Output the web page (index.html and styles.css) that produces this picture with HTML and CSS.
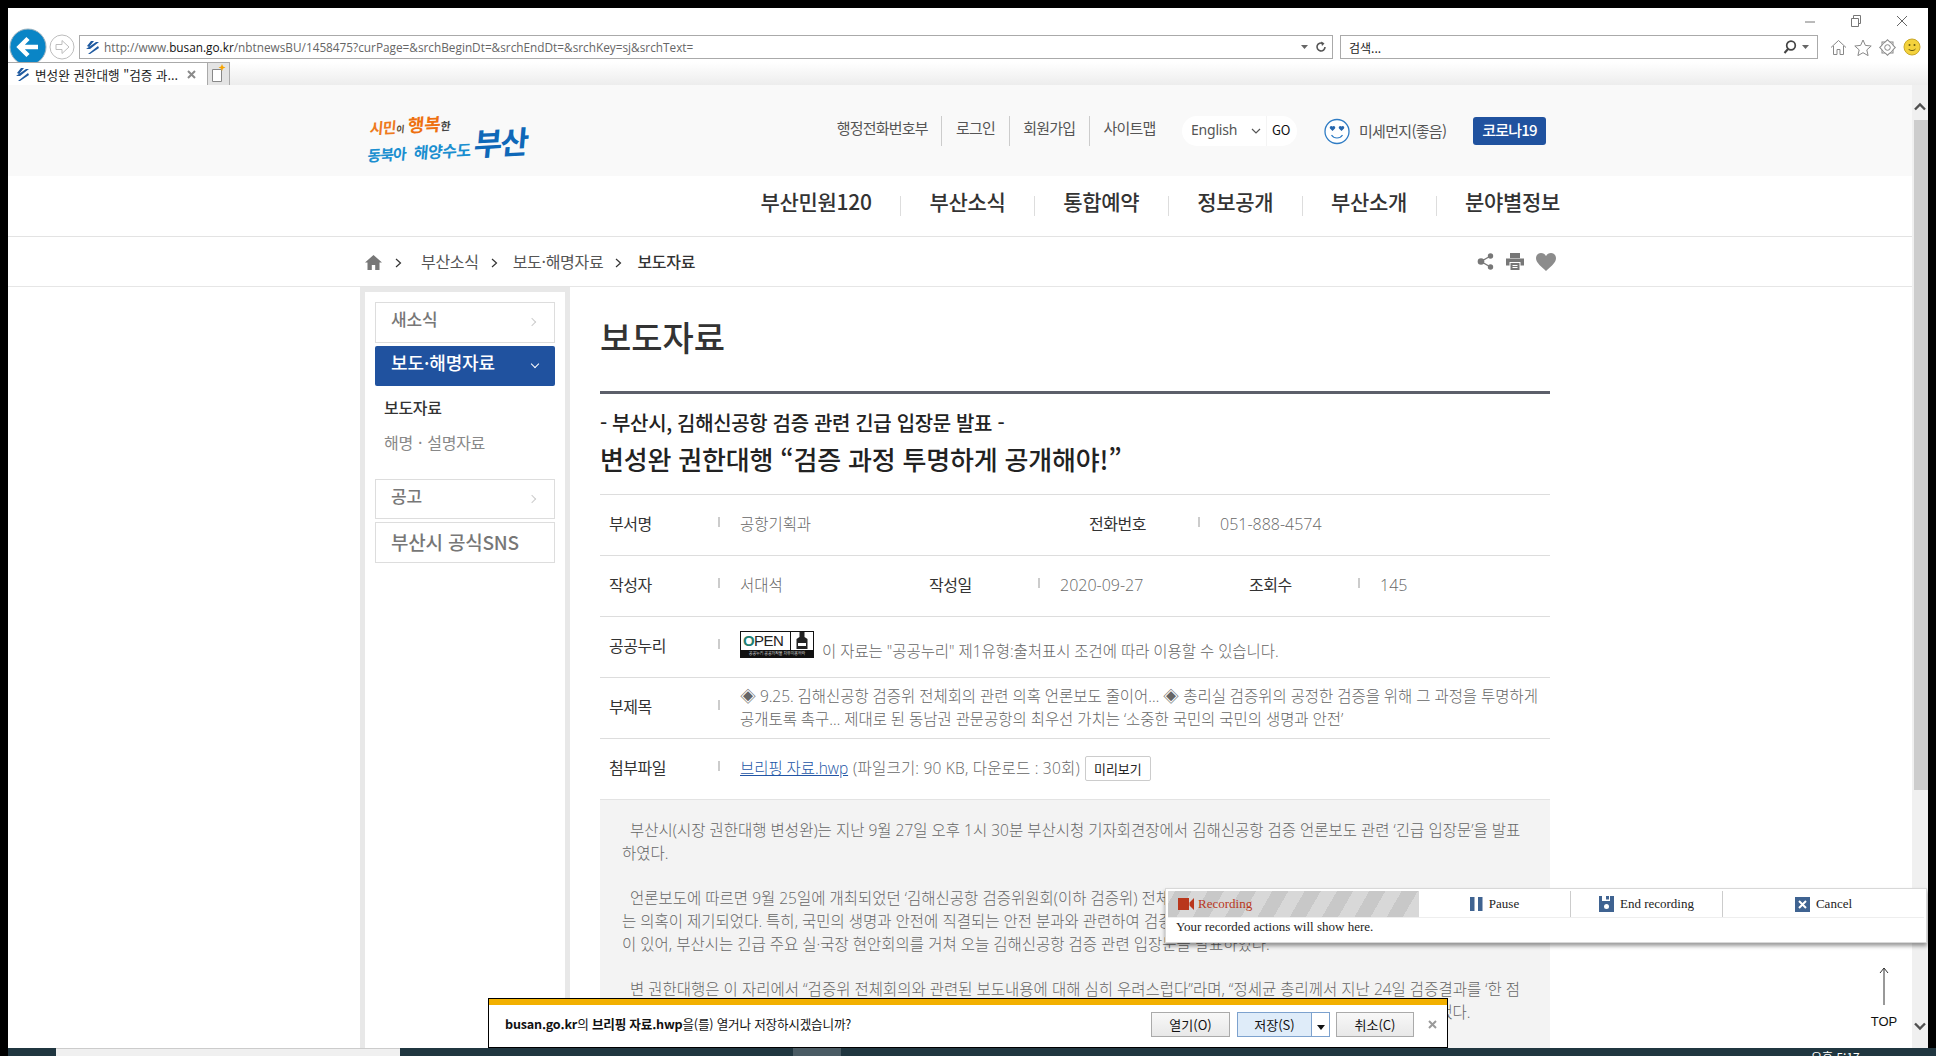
FILE: index.html
```html
<!DOCTYPE html>
<html lang="ko">
  <head>
    <meta charset="UTF-8">
    <title>보도자료</title>
    <link rel="stylesheet" href="styles.css">
  </head>
  <body>
    <div id="window">
      <div id="toolbar">
        <div class="caption">
          <svg class="cap-icon" width="12" height="12" viewBox="0 0 12 12"><path d="M1 7h10" stroke="#777" fill="none"/></svg>
          <svg class="cap-icon" width="12" height="12" viewBox="0 0 12 12"><path d="M1.500 3.500h7v8h-7zM3.500 3.500v-3h7v8h-2" stroke="#777" fill="none"/></svg>
          <svg class="cap-icon" width="12" height="12" viewBox="0 0 12 12"><path d="M1 1l10 10M11 1L1 11" stroke="#666" fill="none"/></svg>
        </div>
        <div class="addr-row">
          <svg class="back" width="38" height="38" viewBox="0 0 38 38">
            <circle cx="19" cy="19" r="18" fill="#0a85c6" stroke="#9fb4c0"/>
            <path d="M29 19H11M19 10.500L10.500 19 19 27.500" stroke="#fff" stroke-width="4.500" fill="none"/>
          </svg>
          <svg class="forward" width="26" height="26" viewBox="0 0 26 26">
            <circle cx="13" cy="13" r="12" fill="#fff" stroke="#bdbdbd"/>
            <path d="M7 10.500h6v-4l7 6.500-7 6.500v-4H7z" fill="none" stroke="#bdbdbd"/>
          </svg>
          <div class="addr">
            <svg width="15" height="15" viewBox="0 0 15 15"><path d="M6 1l3 0-5 6-2-1zM1 9l10-7 3 0-9 7zM13 6l1 2-9 6-2 0z" fill="#1f5aa0"/></svg>
            <span class="url">http://www.<b>busan.go.kr</b>/nbtnewsBU/1458475?curPage=&amp;srchBeginDt=&amp;srchEndDt=&amp;srchKey=sj&amp;srchText=</span>
            <svg class="addr-tail" width="26" height="14" viewBox="0 0 26 14"><path d="M0 5h7l-3.500 4z" fill="#666"/><path d="M22 3.500a4 4 0 1 0 2 3.500" stroke="#555" stroke-width="1.600" fill="none"/><path d="M20 1.500l3.500 2-2.500 2.500z" fill="#555"/></svg>
          </div>
          <div class="find">
            <span>검색...</span>
            <svg width="28" height="16" viewBox="0 0 28 16"><circle cx="8" cy="6.500" r="4.300" stroke="#444" stroke-width="1.700" fill="none"/><path d="M5 10l-3.500 4" stroke="#444" stroke-width="2"/><path d="M19 6h7l-3.500 4z" fill="#666"/></svg>
          </div>
          <div class="tools">
            <svg width="17" height="17" viewBox="0 0 17 17"><path d="M1 8.500L8.500 1.500 16 8.500M3.500 7v8.500h3.500v-5h3v5h3.500V7" stroke="#888" fill="none"/></svg>
            <svg width="18" height="17" viewBox="0 0 18 17"><path d="M9 1l2.400 5.400 5.800.6-4.400 3.900 1.300 5.700L9 13.700l-5.100 2.900 1.300-5.700L.8 7l5.800-.6z" stroke="#888" fill="none"/></svg>
            <svg width="17" height="17" viewBox="0 0 17 17">
              <rect x="3" y="3" width="11" height="11" fill="#fff" stroke="#888"/>
              <rect x="3" y="3" width="11" height="11" fill="#fff" stroke="#888" transform="rotate(45 8.500 8.500)"/>
              <circle cx="8.500" cy="8.500" r="5.200" fill="#fff"/>
              <circle cx="8.500" cy="8.500" r="2.800" stroke="#888" fill="none"/>
            </svg>
            <svg width="18" height="18" viewBox="0 0 18 18"><circle cx="9" cy="9" r="8" fill="#f4d23c" stroke="#c9a82a"/><circle cx="6.500" cy="7" r="1" fill="#6b5a10"/><circle cx="11.500" cy="7" r="1" fill="#6b5a10"/><path d="M5.500 11c1.500 2 5.500 2 7 0" stroke="#6b5a10" fill="none"/></svg>
          </div>
        </div>
      </div>

      <div id="tabs">
        <div class="tab">
          <svg width="15" height="15" viewBox="0 0 15 15"><path d="M6 1l3 0-5 6-2-1zM1 9l10-7 3 0-9 7zM13 6l1 2-9 6-2 0z" fill="#1f5aa0"/></svg>
          <span class="tab-title">변성완 권한대행 "검증 과...</span>
          <svg width="9" height="9" viewBox="0 0 9 9"><path d="M1 1l7 7M8 1L1 8" stroke="#8a8a8a" stroke-width="2"/></svg>
        </div>
        <div class="newtab">
          <svg width="15" height="19" viewBox="0 0 15 19"><path d="M1.500 5.500h9v12h-9z" fill="#fff" stroke="#888"/><path d="M11 0l1 2.500 2.500 1-2.500 1-1 2.500-1-2.500-2.500-1 2.500-1z" fill="#f7a400"/></svg>
        </div>
      </div>

      <div id="view">
        <div id="page">
          <div class="head">
            <div class="wrap head-in">
              <div class="logo">
                <div class="logo-top"><span class="lg-a">시민</span><span class="lg-b">이</span><span class="lg-c">행복</span><span class="lg-d">한</span></div>
                <div class="logo-bot"><span class="lg-e">동북아</span><span class="lg-f">해양수도</span><span class="lg-g">부산</span></div>
              </div>
              <div class="util">
                <a class="ut first">행정전화번호부</a>
                <a class="ut">로그인</a>
                <a class="ut">회원가입</a>
                <a class="ut">사이트맵</a>
                <div class="lang">
                  <span class="lang-name">English</span>
                  <svg width="10" height="6" viewBox="0 0 10 6"><path d="M1 1l4 4 4-4" stroke="#555" fill="none" stroke-width="1.200"/></svg>
                  <span class="lang-go">GO</span>
                </div>
                <svg class="dust-ic" width="26" height="27" viewBox="0 0 26 27">
                  <circle cx="13" cy="13.500" r="12" fill="#fff" stroke="#2f7cc4" stroke-width="1.300"/>
                  <path d="M8.500 8.500c-1.500-1.500-3.500.5-2.500 2l2.500 2.500 2.500-2.500c1-1.500-1-3.500-2.500-2zM17.500 8.500c-1.500-1.500-3.500.5-2.500 2l2.500 2.500 2.500-2.500c1-1.500-1-3.500-2.500-2z" fill="#2566ad"/>
                  <path d="M7.500 17c2.500 4 8.500 4 11 0" stroke="#2f7cc4" stroke-width="1.200" fill="none"/>
                </svg>
                <span class="dust">미세먼지(좋음)</span>
                <a class="corona">코로나19</a>
              </div>
            </div>
          </div>

          <div class="gnb">
            <div class="wrap gnb-in">
              <a class="gn">부산민원120</a>
              <a class="gn">부산소식</a>
              <a class="gn">통합예약</a>
              <a class="gn">정보공개</a>
              <a class="gn">부산소개</a>
              <a class="gn">분야별정보</a>
            </div>
          </div>

          <div class="crumb">
            <div class="wrap crumb-in">
              <svg class="home" width="17" height="15" viewBox="0 0 17 15"><path d="M8.500 0L0 7.500h2.500V15h4.300v-5h3.400v5h4.300V7.500H17z" fill="#777"/></svg>
              <svg class="gt" width="7" height="10" viewBox="0 0 7 10"><path d="M1 1l4.500 4L1 9" stroke="#333" fill="none" stroke-width="1.200"/></svg>
              <a class="cr">부산소식</a>
              <svg class="gt" width="7" height="10" viewBox="0 0 7 10"><path d="M1 1l4.500 4L1 9" stroke="#333" fill="none" stroke-width="1.200"/></svg>
              <a class="cr">보도·해명자료</a>
              <svg class="gt" width="7" height="10" viewBox="0 0 7 10"><path d="M1 1l4.500 4L1 9" stroke="#333" fill="none" stroke-width="1.200"/></svg>
              <a class="cr now">보도자료</a>
              <div class="crumb-tools">
                <svg width="17" height="17" viewBox="0 0 17 17"><path d="M13.500 3L4 8.500l9.500 5.500" stroke="#777" stroke-width="1.400" fill="none"/><circle cx="13.500" cy="3" r="2.700" fill="#777"/><circle cx="4" cy="8.500" r="3.300" fill="#777"/><circle cx="13.500" cy="14" r="2.700" fill="#777"/></svg>
                <svg width="18" height="17" viewBox="0 0 18 17"><path d="M4 0h10v5H4zM0 5.500h18v7h-3.500V9h-11v3.500H0zM4.500 10h9v7h-9z" fill="#777"/><path d="M6.500 12.500h5M6.500 14.500h5" stroke="#fff"/></svg>
                <svg width="20" height="18" viewBox="0 0 20 18"><path d="M10 18C6 14 0 10 0 5.200 0 2 2.400 0 5 0c2.200 0 4 1.200 5 3 1-1.800 2.800-3 5-3 2.600 0 5 2 5 5.200C20 10 14 14 10 18z" fill="#8c8c8c"/></svg>
              </div>
            </div>
          </div>

          <div class="wrap body-in">
            <div class="side">
              <a class="m">새소식<i class="arr"></i></a>
              <a class="m on">보도·해명자료<i class="arr down"></i></a>
              <ul class="sub">
                <li class="cur">보도자료</li>
                <li>해명 · 설명자료</li>
              </ul>
              <a class="m m2">공고<i class="arr"></i></a>
              <a class="m m3">부산시 공식SNS</a>
            </div>

            <div class="main">
              <h1>보도자료</h1>
              <div class="sub-head">- 부산시, 김해신공항 검증 관련 긴급 입장문 발표 -</div>
              <div class="headline">변성완 권한대행 “검증 과정 투명하게 공개해야!”</div>

              <div class="row">
                <div class="cell half"><span class="lbl">부서명</span><i class="sep"></i><span class="val">공항기획과</span></div>
                <div class="cell half"><span class="lbl">전화번호</span><i class="sep"></i><span class="val num">051-888-4574</span></div>
              </div>
              <div class="row">
                <div class="cell third"><span class="lbl">작성자</span><i class="sep"></i><span class="val">서대석</span></div>
                <div class="cell third"><span class="lbl">작성일</span><i class="sep"></i><span class="val num">2020-09-27</span></div>
                <div class="cell third"><span class="lbl">조회수</span><i class="sep"></i><span class="val num">145</span></div>
              </div>
              <div class="row">
                <div class="cell"><span class="lbl">공공누리</span><i class="sep"></i>
                  <span class="val nuri">
                    <span class="badge">
                      <span class="badge-top">
                        <span class="badge-open"><b>O</b>PEN</span>
                        <span class="badge-mark">
                          <svg width="14" height="17" viewBox="0 0 14 17"><path d="M4.500 0h5v5l3 2v10h-11V7l3-2z" fill="#222"/><path d="M3 11h8v3H3z" fill="#fff"/></svg>
                        </span>
                      </span>
                      <span class="badge-foot">공공누리 공공저작물 자유이용허락</span>
                    </span>
                    <span class="nuri-text">이 자료는 "공공누리" 제1유형:출처표시 조건에 따라 이용할 수 있습니다.</span>
                  </span>
                </div>
              </div>
              <div class="row">
                <div class="cell"><span class="lbl">부제목</span><i class="sep"></i><span class="val two">◈ 9.25. 김해신공항 검증위 전체회의 관련 의혹 언론보도 줄이어… ◈ 총리실 검증위의 공정한 검증을 위해 그 과정을 투명하게<br>공개토록 촉구… 제대로 된 동남권 관문공항의 최우선 가치는 ‘소중한 국민의 국민의 생명과 안전’</span></div>
              </div>
              <div class="row">
                <div class="cell"><span class="lbl">첨부파일</span><i class="sep"></i><span class="val"><a class="file">브리핑 자료.hwp</a><span class="file-info">(파일크기: 90 KB, 다운로드 : 30회)</span><button class="preview">미리보기</button></span></div>
              </div>

              <div class="article">
                <p>부산시(시장 권한대행 변성완)는 지난 9월 27일 오후 1시 30분 부산시청 기자회견장에서 김해신공항 검증 언론보도 관련 ‘긴급 입장문’을 발표<br>하였다.</p>
                <p>언론보도에 따르면 9월 25일에 개최되었던 ‘김해신공항 검증위원회(이하 검증위) 전체회의에서 안전 문제가 충분히 논의되지 않았다<br>는 의혹이 제기되었다. 특히, 국민의 생명과 안전에 직결되는 안전 분과와 관련하여 검증위원들의 문제 제기가<br>이 있어, 부산시는 긴급 주요 실·국장 현안회의를 거쳐 오늘 김해신공항 검증 관련 입장문을 발표하였다.</p>
                <p>변 권한대행은 이 자리에서 “검증위 전체회의와 관련된 보도내용에 대해 심히 우려스럽다”라며, “정세균 총리께서 지난 24일 검증결과를 ‘한 점<br>의혹도 남기지 않도록 철저히 검증하라’고 지시한 만큼, 검증위는 검증 과정과 내용을 모두 투명하게 시민께 공개해야 한다”고 강조했다.</p>
              </div>
            </div>
          </div>
        </div>

        <div id="scrollbar">
          <svg class="sb-arrow" width="16" height="16" viewBox="0 0 16 16"><path d="M3 10.500L8 5.500l5 5" stroke="#505050" stroke-width="2.400" fill="none"/></svg>
          <div class="thumb"></div>
          <svg class="sb-arrow sb-low" width="16" height="16" viewBox="0 0 16 16"><path d="M3 5.500l5 5 5-5" stroke="#505050" stroke-width="2.400" fill="none"/></svg>
        </div>
      </div>
    </div>

    <div id="taskbar">
      <div class="task-search"></div>
      <div class="task-active"></div>
      <div class="task-clock">오후 5:17</div>
    </div>

    <div id="top-btn">
      <svg width="10" height="38" viewBox="0 0 10 38"><path d="M5 38V1M1 6l4-5 4 5" stroke="#333" fill="none"/></svg>
      <span>TOP</span>
    </div>

    <div id="recorder">
      <div class="rec-top">
        <div class="rec-state">
          <svg width="16" height="12" viewBox="0 0 16 12"><path d="M0 0h11v12H0zM11.500 4.500L16 0v12l-4.500-4.500z" fill="#b9371c"/></svg>
          <span>Recording</span>
        </div>
        <div class="rec-btn">
          <svg width="13" height="14" viewBox="0 0 13 14"><path d="M0 0h4.500v14H0zM8 0h4.500v14H8z" fill="#3f6391"/></svg>
          <span>Pause</span>
        </div>
        <div class="rec-btn">
          <svg width="15" height="16" viewBox="0 0 15 16"><path d="M0 0h3v5h8V0h4v16H0z" fill="#3f6391"/><path d="M7 0h3v3.500H7z" fill="#3f6391"/><circle cx="7.500" cy="10.500" r="2.500" fill="#fff"/></svg>
          <span>End recording</span>
        </div>
        <div class="rec-btn wide">
          <svg width="15" height="15" viewBox="0 0 15 15"><path d="M0 0h15v15H0z" fill="#3f6391"/><path d="M4 4l7 7M11 4l-7 7" stroke="#fff" stroke-width="2"/></svg>
          <span>Cancel</span>
        </div>
      </div>
      <div class="rec-note">Your recorded actions will show here.</div>
    </div>

    <div id="download">
      <div class="dl-strip"></div>
      <div class="dl-row">
        <div class="dl-text"><b>busan.go.kr</b>의 <b>브리핑 자료.hwp</b>을(를) 열거나 저장하시겠습니까?</div>
        <button class="dl-btn">열기(O)</button>
        <div class="dl-split">
          <button class="dl-save">저장(S)</button>
          <button class="dl-drop"><svg width="8" height="5" viewBox="0 0 8 5"><path d="M0 0h8L4 5z" fill="#111"/></svg></button>
        </div>
        <button class="dl-btn cancel">취소(C)</button>
        <svg class="dl-close" width="9" height="9" viewBox="0 0 9 9"><path d="M1 1l7 7M8 1L1 8" stroke="#9a9a9a" stroke-width="2"/></svg>
      </div>
    </div>
  </body>
</html>
```

FILE: styles.css
```css
* {
  box-sizing: border-box;
}
html,
body {
  margin: 0;
  height: 1056px;
  overflow: hidden;
  background-color: #000;
}
body {
  position: relative;
  padding-top: 8px;
  font-family: "Noto Sans CJK KR", "Noto Sans", sans-serif;
  color: #333;
}
a {
  color: inherit;
  text-decoration: none;
}
i {
  font-style: normal;
}

/* browser window */
#window {
  width: 1920px;
  height: 1040px;
  margin-left: 8px;
  background-color: #fff;
  display: flex;
  flex-direction: column;
}
#toolbar {
  height: 54px;
  flex: none;
}
.caption {
  height: 27px;
  display: flex;
  justify-content: flex-end;
  align-items: center;
  gap: 34px;
  padding: 0 20px 2px 0;
}
.addr-row {
  height: 24px;
  display: flex;
  align-items: center;
}
.back {
  margin-left: 1px;
  flex: none;
}
.forward {
  margin-left: 2px;
  flex: none;
}
.addr {
  width: 1254px;
  height: 24px;
  margin-left: 4px;
  border: 1px solid #aaa;
  display: flex;
  align-items: center;
  padding-left: 5px;
  flex: none;
}
.url {
  margin-left: 4px;
  font-family: "Open Sans", sans-serif;
  font-size: 11.800px;
  color: #666;
  white-space: nowrap;
}
.url b {
  font-weight: 400;
  color: #111;
}
.addr-tail {
  margin-left: auto;
  margin-right: 5px;
}
.find {
  width: 478px;
  height: 24px;
  margin-left: 7px;
  border: 1px solid #aaa;
  display: flex;
  align-items: center;
  justify-content: space-between;
  padding: 0 6px 0 8px;
  font-size: 12px;
  color: #222;
  flex: none;
}
.tools {
  display: flex;
  align-items: center;
  gap: 7px;
  margin-left: 12px;
}

#tabs {
  height: 23px;
  flex: none;
  display: flex;
  position: relative;
  background: linear-gradient(#fff, #ededed);
}
.tab {
  width: 200px;
  height: 23px;
  background-color: #fff;
  border: 1px solid #aaa;
  border-bottom: none;
  border-left: none;
  display: flex;
  align-items: center;
  padding: 0 7px;
  font-size: 12.600px;
  color: #222;
}
.tab-title {
  margin-left: 5px;
  width: 152px;
  white-space: nowrap;
}
.newtab {
  width: 22px;
  height: 23px;
  background-color: #e4e4e4;
  border: 1px solid #aaa;
  border-left: none;
  border-bottom: none;
  padding: 1px 0 0 3px;
}

#view {
  flex: 1;
  display: flex;
  min-height: 0;
}
#page {
  width: 1904px;
  height: 963px;
  overflow: hidden;
}
.wrap {
  width: 1200px;
  margin: 0 auto;
}

/* header */
.head {
  height: 91px;
  background-color: #f9f9f9;
}
.head-in {
  display: flex;
  height: 91px;
}
.logo {
  margin: 27px 0 0 8px;
  width: 166px;
  white-space: nowrap;
  font-weight: 700;
  transform: rotate(-3deg) skewX(-8deg);
}
.logo-top {
  display: flex;
  align-items: baseline;
  height: 20px;
  line-height: 20px;
}
.lg-a {
  font-size: 15px;
  color: #ee7a1e;
  letter-spacing: -1px;
}
.lg-b {
  font-size: 9px;
  color: #5a4a30;
  margin: 0 3px 0 1px;
}
.lg-c {
  font-size: 18px;
  color: #ee7010;
}
.lg-d {
  font-size: 11px;
  color: #444;
}
.logo-bot {
  display: flex;
  align-items: baseline;
  height: 24px;
  line-height: 24px;
}
.lg-e {
  font-size: 15px;
  color: #1b8fd0;
  letter-spacing: -1px;
  margin-right: 8px;
}
.lg-f {
  font-size: 16px;
  letter-spacing: -.5px;
  color: #1b8fd0;
}
.lg-g {
  font-size: 31px;
  color: #0f68b8;
  letter-spacing: -2px;
  margin-left: 3px;
}
.util {
  margin-left: auto;
  margin-top: 31px;
  padding-right: 14px;
  height: 30px;
  display: flex;
  align-items: center;
}
.ut {
  font-size: 15px;
  letter-spacing: -.8px;
  color: #555;
  height: 30px;
  line-height: 24px;
  padding: 0 13.600px;
  border-left: 1px solid #ccc;
}
.ut.first {
  border-left: none;
}
.lang {
  width: 115px;
  height: 30px;
  margin-left: 13px;
  background-color: #fff;
  border-radius: 15px;
  display: flex;
  align-items: center;
  padding-left: 9px;
  font-size: 13px;
  letter-spacing: -.2px;
}
.lang-name {
  color: #555;
  width: 60px;
  font-family: "Noto Sans", sans-serif;
  font-size: 14px;
  line-height: 24px;
  margin-bottom: 2px;
}
.lang-go {
  margin-left: 5px;
  padding-left: 5px;
  height: 30px;
  line-height: 28px;
  border-left: 1px solid #f4f4f4;
  color: #111;
}
.dust-ic {
  margin-left: 27px;
  flex: none;
}
.dust {
  margin-left: 9px;
  font-size: 15px;
  line-height: 23px;
  margin-bottom: 2px;
  letter-spacing: -.7px;
  color: #555;
  width: 114px;
  white-space: nowrap;
}
.corona {
  width: 73px;
  height: 28px;
  line-height: 26px;
  text-align: center;
  background-color: #20529f;
  border-radius: 3px;
  color: #fff;
  font-size: 15px;
  font-weight: 500;
  letter-spacing: -.8px;
}

.gnb {
  height: 61px;
  border-bottom: 1px solid #e3e3e3;
  background-color: #fff;
}
.gnb-in {
  height: 60px;
  display: flex;
  justify-content: flex-end;
  align-items: center;
}
.gn {
  height: 20px;
  line-height: 10px;
  padding: 0 28.400px;
  border-left: 1px solid #ddd;
  font-size: 21px;
  font-weight: 500;
  letter-spacing: -.3px;
  color: #333;
}
.gn:first-child {
  border-left: none;
}
.gn:last-child {
  padding-right: 0;
}

.crumb {
  height: 50px;
  border-bottom: 1px solid #e6e6e6;
}
.crumb-in {
  height: 49px;
  display: flex;
  align-items: center;
  padding-left: 5px;
}
.gt {
  margin: 3px 15px 0 12px;
  flex: none;
}
.home {
  margin-top: 2px;
}
.home + .gt {
  margin: 3px 19px 0 13px;
}
.cr {
  font-size: 16px;
  letter-spacing: -.3px;
  color: #555;
  white-space: nowrap;
  margin-bottom: 2px;
}
.cr.now {
  color: #333;
  font-weight: 500;
}
.crumb-tools {
  margin-left: auto;
  margin-right: 4px;
  display: flex;
  align-items: center;
  gap: 12px;
}

/* body */
.body-in {
  display: flex;
}
.side {
  width: 210px;
  flex: none;
  height: 800px;
  border: 5px solid #e8e8e8;
  padding: 10px;
}
.m {
  display: block;
  position: relative;
  height: 41px;
  border: 1px solid #ddd;
  padding-left: 15px;
  font-size: 17px;
  font-weight: 500;
  letter-spacing: -.1px;
  line-height: 31px;
  color: #777;
}
.m.on {
  margin-top: 3px;
  height: 40px;
  border: none;
  border-radius: 2px;
  background-color: #20529f;
  color: #fff;
  padding-left: 16px;
  font-size: 18px;
  line-height: 33px;
}
.m2 {
  margin-top: 18px;
  height: 40px;
}
.m3 {
  margin-top: 3px;
  font-size: 19px;
  letter-spacing: -.2px;
  line-height: 38px;
}
.arr {
  position: absolute;
  top: 16px;
  right: 19px;
  width: 6px;
  height: 6px;
  border-top: 1.500px solid #ccc;
  border-right: 1.500px solid #ccc;
  transform: rotate(45deg);
}
.arr.down {
  top: 15px;
  right: 17px;
  border-color: #fff;
  transform: rotate(135deg);
}
.sub {
  list-style: none;
  margin: 0;
  padding: 5px 0 0 9px;
}
.sub li {
  height: 35px;
  line-height: 33px;
  font-size: 16px;
  letter-spacing: -.3px;
  word-spacing: 1px;
  color: #888;
}
.sub li.cur {
  color: #333;
  font-weight: 500;
}

.main {
  width: 950px;
  margin-left: 30px;
  flex: none;
}
h1 {
  margin: 0;
  height: 107px;
  line-height: 100px;
  border-bottom: 3px solid #5c5f6a;
  font-size: 34px;
  font-weight: 500;
  letter-spacing: 0;
  color: #333;
}
.sub-head {
  margin-top: 14px;
  height: 30px;
  line-height: 30px;
  font-size: 20px;
  font-weight: 500;
  letter-spacing: -.35px;
  color: #222;
}
.headline {
  margin: 2px 0 14px;
  height: 40px;
  line-height: 38px;
  font-size: 26px;
  font-weight: 500;
  letter-spacing: -.2px;
  color: #222;
}
.row {
  height: 61px;
  border-top: 1px solid #ddd;
  display: flex;
  align-items: center;
}
.cell {
  display: flex;
  align-items: center;
  flex: none;
  margin-bottom: 4px;
}
.half {
  width: 480px;
}
.third {
  width: 320px;
}
.lbl {
  width: 118px;
  padding-left: 9px;
  font-size: 16px;
  letter-spacing: -.5px;
  color: #333;
  flex: none;
}
.sep {
  width: 2px;
  height: 10px;
  background-color: #ccc;
  margin: 0 20px 2px 0;
  flex: none;
}
.val {
  font-family: "Open Sans", "Noto Sans CJK KR", sans-serif;
  font-size: 15.500px;
  font-weight: 300;
  letter-spacing: -.05px;
  color: #666;
  white-space: nowrap;
  display: flex;
  align-items: center;
  gap: 5px;
}
.val.num {
  font-size: 16px;
  letter-spacing: 0;
  margin-top: 2px;
}
.val.two {
  display: block;
  line-height: 23px;
  margin-top: 3px;
}
.nuri {
  align-items: flex-end;
  margin-top: -2px;
  gap: 0;
}
.nuri-text {
  margin: 0 0 -4px 8px;
  line-height: 22px;
}
.badge {
  width: 74px;
  height: 27px;
  border: 1px solid #111;
  background-color: #fff;
  display: flex;
  flex-direction: column;
}
.badge-top {
  flex: 1;
  display: flex;
  justify-content: space-between;
  align-items: stretch;
  padding-left: 2px;
  overflow: hidden;
}
.badge-open {
  font-family: "Liberation Sans", sans-serif;
  font-size: 15px;
  line-height: 18px;
  font-weight: 400;
  letter-spacing: -.6px;
  color: #222;
}
.badge-open b {
  color: #1e7f72;
}
.badge-mark {
  width: 23px;
  border-left: 1px solid #111;
  text-align: center;
}
.badge-foot {
  height: 7px;
  background-color: #111;
  color: #fff;
  font-size: 4px;
  line-height: 7px;
  text-align: center;
  white-space: nowrap;
  overflow: hidden;
}
.file {
  color: #2255a5;
  text-decoration: underline;
}
.file-info {
  letter-spacing: .2px;
}
.preview {
  width: 66px;
  height: 25px;
  margin-top: 3px;
  padding: 0;
  background-color: #fff;
  border: 1px solid #ccc;
  border-radius: 2px;
  font-family: "Noto Sans CJK KR", sans-serif;
  font-size: 13px;
  color: #222;
}
.article {
  border-top: 1px solid #e3e3e3;
  background-color: #f3f3f3;
  padding: 19px 22px 120px;
  font-family: "Open Sans", "Noto Sans CJK KR", sans-serif;
  font-size: 15.500px;
  font-weight: 300;
  letter-spacing: 0;
  line-height: 22.700px;
  color: #666;
  white-space: nowrap;
}
.article p {
  margin: 0 0 22.700px;
  text-indent: 8px;
}

/* scrollbar */
#scrollbar {
  width: 16px;
  height: 963px;
  background-color: #f0f0f0;
  position: relative;
}
.sb-arrow {
  position: absolute;
  top: 14px;
  left: 0;
}
.sb-low {
  top: 933px;
}
.thumb {
  position: absolute;
  top: 35px;
  left: 2px;
  width: 14px;
  height: 670px;
  background-color: #cdcdcd;
}

#taskbar {
  width: 1928px;
  height: 8px;
  margin-left: 8px;
  background-color: #203640;
  position: relative;
  display: flex;
  overflow: hidden;
}
.task-search {
  width: 344px;
  margin-left: 48px;
  background-color: #f0f0f0;
  border-top: 1px solid #ccc;
}
.task-active {
  width: 48px;
  margin-left: 393px;
  background-color: #4a5b64;
}
.task-clock {
  margin-left: 970px;
  font-size: 12px;
  line-height: 17px;
  color: #fff;
  white-space: nowrap;
}

/* things that float over the page */
#top-btn {
  position: absolute;
  left: 1868px;
  top: 967px;
  width: 32px;
  text-align: center;
  font-family: "Liberation Sans", sans-serif;
  font-size: 13px;
  color: #111;
}
#top-btn svg {
  display: block;
  margin: 0 auto 9px;
}
#recorder {
  position: absolute;
  left: 1165px;
  top: 888px;
  width: 762px;
  height: 55px;
  padding: 2px;
  background-color: #fff;
  border: 1px solid #d8d8d8;
  box-shadow: 0 3px 4px rgba(0, 0, 0, .4);
  font-family: "Liberation Serif", serif;
  font-size: 13px;
  color: #222;
}
.rec-top {
  display: flex;
  height: 27px;
  border-bottom: 1px solid #eee;
}
.rec-state {
  width: 251px;
  display: flex;
  align-items: center;
  padding-left: 10px;
  gap: 4px;
  color: #b9371c;
  background: repeating-linear-gradient(-60deg, #d8d8d8 0 14px, #c8c8c8 14px 28px);
}
.rec-btn {
  width: 152px;
  display: flex;
  align-items: center;
  justify-content: center;
  gap: 6px;
  border-right: 1px solid #ccc;
}
.rec-btn.wide {
  flex: 1;
  border-right: none;
}
.rec-note {
  padding: 1px 0 0 8px;
}
#download {
  position: absolute;
  left: 488px;
  top: 998px;
  width: 960px;
  height: 50px;
  border: 1px solid #000;
  border-width: 1.500px;
  background-color: #fff;
}
.dl-strip {
  height: 6px;
  background-color: #f2b000;
}
.dl-row {
  height: 41px;
  display: flex;
  align-items: center;
  padding: 0 0 2px 16px;
  font-size: 12.600px;
  letter-spacing: -.2px;
  color: #111;
}
.dl-text {
  width: 646px;
  white-space: nowrap;
  margin-bottom: 3px;
}
.dl-text b {
  font-weight: 700;
}
.dl-btn,
.dl-save,
.dl-drop {
  height: 25px;
  padding: 0;
  border: 1px solid #aaa;
  background: linear-gradient(#f8f8f8, #e8e8e8);
  font-family: inherit;
  font-size: 13px;
  color: #111;
}
.dl-btn {
  width: 79px;
}
.dl-btn.cancel {
  width: 78px;
  margin-left: 6px;
}
.dl-split {
  display: flex;
  width: 93px;
  margin-left: 7px;
}
.dl-save {
  width: 75px;
  border-color: #7da2ce;
  background: #dfecf9;
}
.dl-drop {
  width: 18px;
  border-color: #7da2ce;
  border-left: none;
  background: #fff;
}
.dl-close {
  margin-left: 14px;
}
```
